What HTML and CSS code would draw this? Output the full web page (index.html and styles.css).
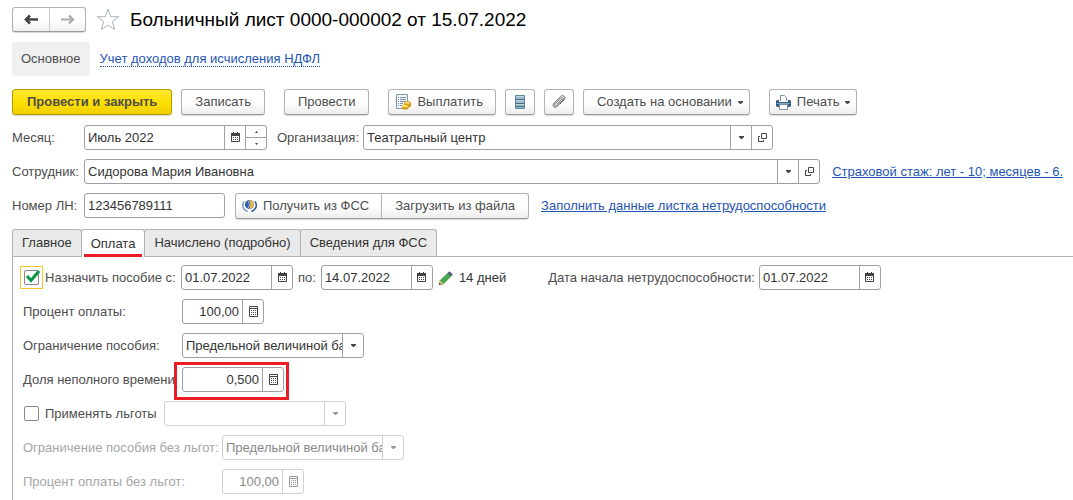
FILE: index.html
```html
<!DOCTYPE html>
<html lang="ru">
<head>
  <meta charset="UTF-8">
  <meta name="viewport" content="width=device-width, initial-scale=1.0">
  <title>Больничный лист 0000-000002 от 15.07.2022</title>
  <link rel="stylesheet" href="styles.css">
</head>
<body>
<!-- Общие иконки полей -->
<svg class="sprite" aria-hidden="true">
  <symbol id="i-calendar" viewBox="0 0 11 11">
    <path d="M1.500 2.500h8v7h-8z" fill="#fff" stroke="#444"/>
    <path d="M1 1h9v3H1z" fill="#444"/>
    <path d="M3.500 0v2M7.500 0v2" stroke="#444"/>
    <path d="M3 5.500h1M5 5.500h1M7 5.500h1M3 7.500h1M5 7.500h1M7 7.500h1" stroke="#444"/>
  </symbol>
  <symbol id="i-calc" viewBox="0 0 11 11">
    <path d="M1.500.5h8v10h-8z" fill="none" stroke="currentColor"/>
    <path d="M2 2.500h7" stroke="currentColor"/>
    <path d="M3 4.500h1M5 4.500h1M7 4.500h1M3 6.500h1M5 6.500h1M7 6.500h1M3 8.500h1M5 8.500h1M7 8.500h1" stroke="currentColor"/>
  </symbol>
  <symbol id="i-open" viewBox="0 0 11 11">
    <path d="M4.500 1.500h5v5h-5z" fill="none" stroke="#444"/>
    <path d="M3 4.500H1.500v5h5V8" fill="none" stroke="#444"/>
  </symbol>
  <symbol id="i-arrow" viewBox="0 0 5 3">
    <path d="M0 0h5v1L3 3H2L0 1z" fill="currentColor"/>
  </symbol>
</svg>

<header class="header">
  <div class="history">
    <button type="button" aria-label="Назад">
      <svg width="15" height="11" viewBox="0 0 15 11"><path d="M2 5.500h12M6 1.500l-4 4 4 4" fill="none" stroke="#444" stroke-width="2.600"/></svg>
    </button>
    <button type="button" aria-label="Вперед">
      <svg width="15" height="11" viewBox="0 0 15 11"><path d="M1 5.500h12M9 1.500l4 4-4 4" fill="none" stroke="#aaa" stroke-width="2.200"/></svg>
    </button>
  </div>
  <button type="button" class="star" aria-label="В избранное">
    <svg width="24" height="23" viewBox="0 0 24 23"><path d="M12 1.200l2.700 7.500h8l-6.400 4.900 2.400 8L12 17l-6.700 4.600 2.400-8-6.400-4.900h8z" fill="#fff" stroke="#a9b3bd"/></svg>
  </button>
  <h1>Больничный лист 0000-000002 от 15.07.2022</h1>
</header>

<nav class="nav">
  <a href="#" class="nav-current">Основное</a>
  <a href="#" class="nav-link">Учет доходов для исчисления НДФЛ</a>
</nav>

<div class="toolbar">
  <button type="button" class="btn primary">Провести и закрыть</button>
  <button type="button" class="btn">Записать</button>
  <button type="button" class="btn spaced">Провести</button>
  <button type="button" class="btn with-icon spaced">
    <svg width="16" height="16" viewBox="0 0 16 16">
      <path d="M1.500.5h11v14h-11z" fill="#f5f8fa" stroke="#8197a8"/>
      <path d="M3 3.500h1M5 3.500h6M3 5.500h1M5 5.500h6M3 7.500h1M5 7.500h6M3 9.500h1M5 9.500h3M3 11.500h1M5 11.500h2" stroke="#7893a8"/>
      <path d="M7 11.500v2.500c0 2.300 6 2.300 6.500 0l2.500-1.500V8.500H9v2z" fill="#e5ac22"/>
      <ellipse cx="12.300" cy="8.700" rx="3.300" ry="1.400" fill="#ffe078" stroke="#c18a12" stroke-width=".6"/>
      <path d="M9 10.500c1 1.500 6 1.500 7 0M7 13.500c1 1.500 5 1.500 6.500 0" fill="none" stroke="#b87e0c" stroke-width=".7"/>
      <ellipse cx="10" cy="12" rx="3" ry="1.200" fill="#ffdc62"/>
    </svg>
    Выплатить
  </button>
  <button type="button" class="btn square" aria-label="Реестр">
    <svg width="10" height="14" viewBox="0 0 10 14">
      <path d="M.5.5h9v13h-9z" fill="#9dbbd0" stroke="#5f8199"/>
      <path d="M1 4.500h8M1 8.500h8M1 11.500h8" stroke="#46677f"/>
      <path d="M1 1.500h8M1 5.500h8M1 9.500h8" stroke="#b9d0df"/>
    </svg>
  </button>
  <button type="button" class="btn square" aria-label="Файлы">
    <svg width="14" height="14" viewBox="0 0 14 14"><path d="M4 9.700l5.300-5.300c.8-.8 1.700.1.900.9L4.800 10.700c-1.500 1.500-3.400-.4-1.900-1.900L8.600 3.100c2-2 4.400.4 2.400 2.400L5.300 11.200C2.600 13.900-.6 10.700 2.100 8L8.500 1.600c2.600-2.600 6 .7 3.400 3.400L8 9" fill="none" stroke="#606060" stroke-width=".9"/></svg>
  </button>
  <button type="button" class="btn">Создать на основании <svg class="caret"><use href="#i-arrow"/></svg></button>
  <button type="button" class="btn with-icon spaced">
    <svg width="15" height="15" viewBox="0 0 15 15">
      <path d="M4.500 6V.500h4l2 2V6" fill="#fff" stroke="#7893a8"/>
      <path d="M1 5h2v2h9V5h2l1 1v5l-1 1H1l-1-1V6z" fill="#315f83"/>
      <path d="M1 8.500h13" stroke="#86a8c1"/>
      <path d="M3.500 9.500h8v5h-8z" fill="#fff" stroke="#7893a8"/>
    </svg>
    Печать <svg class="caret"><use href="#i-arrow"/></svg>
  </button>
</div>

<main class="form">
  <div class="row">
    <label class="head-label" for="month">Месяц:</label>
    <div class="field month">
      <input type="text" id="month" value="Июль 2022">
      <button type="button" aria-label="Выбрать месяц"><svg class="icon"><use href="#i-calendar"/></svg></button>
      <div class="spin">
        <button type="button" aria-label="Больше"><svg width="3" height="2" viewBox="0 0 3 2"><path d="M0 2h3L1.500 0z" fill="#444"/></svg></button>
        <button type="button" aria-label="Меньше"><svg width="3" height="2" viewBox="0 0 3 2"><path d="M0 0h3L1.500 2z" fill="#444"/></svg></button>
      </div>
    </div>
    <label class="org-label" for="org">Организация:</label>
    <div class="field org">
      <select id="org"><option>Театральный центр</option></select>
      <span class="drop"><svg class="caret"><use href="#i-arrow"/></svg></span>
      <button type="button" aria-label="Открыть организацию"><svg class="icon"><use href="#i-open"/></svg></button>
    </div>
  </div>

  <div class="row">
    <label class="head-label" for="employee">Сотрудник:</label>
    <div class="field employee">
      <select id="employee"><option>Сидорова Мария Ивановна</option></select>
      <span class="drop"><svg class="caret"><use href="#i-arrow"/></svg></span>
      <button type="button" aria-label="Открыть сотрудника"><svg class="icon"><use href="#i-open"/></svg></button>
    </div>
    <a href="#" class="link">Страховой стаж: лет - 10; месяцев - 6.</a>
  </div>

  <div class="row">
    <label class="head-label" for="number">Номер ЛН:</label>
    <div class="field number"><input type="text" id="number" value="123456789111"></div>
    <div class="btn-group">
      <button type="button" class="btn with-icon">
        <svg width="15" height="14" viewBox="0 0 15 14">
          <path d="M2 2.500C-.5 6 .5 10.500 5.500 12.500" fill="none" stroke="#7fa6cf" stroke-width="1.600"/>
          <path d="M13 2.500c2.500 3.500 1.500 8-3.500 10" fill="none" stroke="#2e5e9e" stroke-width="1.600"/>
          <circle cx="7.500" cy="5.500" r="4.500" fill="#2f62a5"/>
          <path d="M7 1c6.500 0 6.500 9 0 9 2-3 2-6 0-9z" fill="#f3ba3f"/>
          <path d="M5.500 1.500c2.500 2.500 2.500 6 0 8" fill="none" stroke="#b9d2ea"/>
        </svg>
        Получить из ФСС
      </button>
      <button type="button" class="btn">Загрузить из файла</button>
    </div>
    <a href="#" class="link">Заполнить данные листка нетрудоспособности</a>
  </div>
</main>

<div class="tabs" role="tablist">
  <button type="button" role="tab">Главное</button>
  <button type="button" role="tab" class="active" aria-selected="true">Оплата</button>
  <button type="button" role="tab">Начислено (подробно)</button>
  <button type="button" role="tab">Сведения для ФСС</button>
</div>

<section class="panel" role="tabpanel">
  <div class="row">
    <span class="check focused">
      <input type="checkbox" id="assign" checked>
      <svg width="14" height="13" viewBox="0 0 14 13"><path d="M1 6L5 10.500l8-9.500" fill="none" stroke="#0a9648" stroke-width="3"/></svg>
    </span>
    <label class="assign-label" for="assign">Назначить пособие с:</label>
    <div class="field date">
      <input type="text" aria-label="Дата начала пособия" value="01.07.2022">
      <button type="button" aria-label="Календарь"><svg class="icon"><use href="#i-calendar"/></svg></button>
    </div>
    <label class="to-label" for="date-to">по:</label>
    <div class="field date">
      <input type="text" id="date-to" value="14.07.2022">
      <button type="button" aria-label="Календарь"><svg class="icon"><use href="#i-calendar"/></svg></button>
    </div>
    <svg class="pencil" width="14" height="14" viewBox="0 0 14 14">
      <path d="M0 14l1.200-4.500L8.500 2.200l3.300 3.300L4.500 12.800z" fill="#46ac51" stroke="#317c3b" stroke-width=".6"/>
      <path d="M0 14l1.200-4.500 3.300 3.300z" fill="#e9b266"/>
      <path d="M0 14l.5-2 1.500 1.500z" fill="#333"/>
      <path d="M8.500 2.200L10.500.200l3.300 3.300-2 2z" fill="#4a5872"/>
    </svg>
    <span class="days">14 дней</span>
    <label class="start-label" for="date-start">Дата начала нетрудоспособности:</label>
    <div class="field date-start">
      <input type="text" id="date-start" value="01.07.2022">
      <button type="button" aria-label="Календарь"><svg class="icon"><use href="#i-calendar"/></svg></button>
    </div>
  </div>

  <div class="row">
    <label class="label" for="percent">Процент оплаты:</label>
    <div class="field percent">
      <input type="text" id="percent" value="100,00">
      <button type="button" aria-label="Калькулятор"><svg class="icon"><use href="#i-calc"/></svg></button>
    </div>
  </div>

  <div class="row">
    <label class="label" for="limit">Ограничение пособия:</label>
    <div class="field limit">
      <select id="limit"><option>Предельной величиной базы</option></select>
      <span class="drop"><svg class="caret"><use href="#i-arrow"/></svg></span>
    </div>
  </div>

  <div class="row">
    <label class="label" for="share">Доля неполного времени</label>
    <div class="field share">
      <input type="text" id="share" value="0,500">
      <button type="button" aria-label="Калькулятор"><svg class="icon"><use href="#i-calc"/></svg></button>
    </div>
  </div>

  <div class="row">
    <span class="check"><input type="checkbox" id="benefits"></span>
    <label class="benefits-label" for="benefits">Применять льготы</label>
    <div class="field limit disabled">
      <select aria-label="Льгота" disabled><option></option></select>
      <span class="drop"><svg class="caret"><use href="#i-arrow"/></svg></span>
    </div>
  </div>

  <div class="row disabled">
    <label class="label wide" for="limit-plain">Ограничение пособия без льгот:</label>
    <div class="field limit disabled">
      <select id="limit-plain" disabled><option>Предельной величиной базы</option></select>
      <span class="drop"><svg class="caret"><use href="#i-arrow"/></svg></span>
    </div>
  </div>

  <div class="row disabled">
    <label class="label wide" for="percent-plain">Процент оплаты без льгот:</label>
    <div class="field percent disabled">
      <input type="text" id="percent-plain" value="100,00" disabled>
      <button type="button" aria-label="Калькулятор" disabled><svg class="icon"><use href="#i-calc"/></svg></button>
    </div>
  </div>
</section>
</body>
</html>
```
FILE: styles.css
```css
:root {
  --text: #4d4d4d;
  --input-text: #333333;
  --border: #a0a0a0;
  --line: #b3b3b3;
  --link: #1f55b5;
  --red: #ed1c24;
}

* {
  box-sizing: border-box;
}

body {
  display: flex;
  flex-direction: column;
  min-height: 100vh;
  margin: 0;
  padding: 7px 0 0 12px;
  background-color: #fff;
  color: var(--text);
  font: 13px/16px "Liberation Sans", Arial, sans-serif;
}

button,
input,
select {
  margin: 0;
  font: inherit;
  color: inherit;
}

button {
  padding: 0;
  border: none;
  background: none;
  cursor: pointer;
}

svg {
  display: block;
  flex: none;
}

.sprite {
  position: absolute;
  width: 0;
  height: 0;
}

.icon {
  width: 11px;
  height: 11px;
}

.caret {
  width: 5px;
  height: 3px;
}

/* Заголовок */
.header {
  display: flex;
  align-items: center;
  height: 25px;
}

.history {
  display: flex;
  height: 25px;
  border: 1px solid var(--line);
  border-bottom-color: #999;
  border-radius: 3px;
  background: linear-gradient(#fff 50%, #f0f0f0);
  box-shadow: 0 1px 1px rgba(0, 0, 0, 0.15);
}

.history button {
  display: flex;
  align-items: center;
  justify-content: center;
  width: 36px;
}

.history button + button {
  border-left: 1px solid #ccc;
}

.star {
  margin: 0 10px;
}

h1 {
  margin: 0;
  color: #000;
  font-size: 19px;
  font-weight: normal;
  line-height: 25px;
}

/* Навигация */
.nav {
  display: flex;
  align-items: center;
  gap: 10px;
  margin-top: 10px;
}

.nav-current {
  padding: 9px;
  border-radius: 3px;
  background-color: #f0f0f0;
  color: var(--text);
  text-decoration: none;
}

.nav-link {
  border-bottom: 1px dotted var(--link);
  color: var(--link);
  line-height: 14px;
  text-decoration: none;
}

/* Командная панель */
.toolbar {
  display: flex;
  gap: 9px;
  margin-top: 13px;
}

.btn {
  display: flex;
  align-items: center;
  justify-content: center;
  gap: 6px;
  height: 26px;
  padding: 0 13px;
  border: 1px solid var(--line);
  border-bottom-color: #999;
  border-radius: 3px;
  background: linear-gradient(#fff 50%, #ededed);
  box-shadow: 0 1px 1px rgba(0, 0, 0, 0.15);
  white-space: nowrap;
}

.btn:hover {
  background: #f2f2f2;
}

.btn.primary {
  padding: 0 14px;
  border-color: #b39b00;
  background: linear-gradient(#ffe834, #ffe000 50%, #efcf00);
  font-weight: bold;
}

.btn.spaced {
  margin-left: 10px;
}

.btn.with-icon {
  padding: 0 12px 0 6px;
}

.btn.square {
  width: 30px;
  padding: 0;
}

.btn:has(.caret) {
  padding-right: 6px;
}

/* Поля */
.form {
  display: flex;
  flex-direction: column;
  gap: 9px;
  margin: 10px 10px 0 0;
}

.row {
  display: flex;
  align-items: center;
  height: 25px;
  white-space: nowrap;
}

.row label {
  flex: none;
}

.head-label {
  width: 72px;
}

.field {
  position: relative;
  display: flex;
  flex: none;
  height: 25px;
  border: 1px solid var(--border);
  border-radius: 3px;
  background-color: #fff;
  color: var(--input-text);
}

.field input,
.field select {
  flex: 1;
  min-width: 0;
  padding: 0 3px;
  border: none;
  outline: none;
  background: none;
  appearance: none;
}

.field > button,
.drop,
.spin {
  display: flex;
  flex: none;
  align-items: center;
  justify-content: center;
  width: 21px;
  border-left: 1px solid var(--border);
  color: #444;
}

.spin {
  flex-direction: column;
  align-items: stretch;
}

.spin button {
  display: flex;
  flex: 1;
  align-items: center;
  justify-content: center;
}

.spin button + button {
  border-top: 1px solid var(--border);
}

.month {
  width: 183px;
}

.org-label {
  width: 86px;
  margin-left: 10px;
}

.field.org {
  flex: 0 1 410px;
}

.field.employee {
  flex: 1;
}

.number {
  width: 141px;
}

.link {
  margin-left: 12px;
  color: var(--link);
}

.btn-group {
  display: flex;
  margin-left: 10px;
}

.btn-group .btn:first-child {
  border-radius: 3px 0 0 3px;
}

.btn-group .btn:last-child {
  margin-left: -1px;
  border-radius: 0 3px 3px 0;
}

/* Вкладки */
.tabs {
  display: flex;
  margin-top: 11px;
}

.tabs button {
  height: 27px;
  padding: 0 9px;
  border: 1px solid var(--line);
  border-bottom: none;
  border-radius: 3px 3px 0 0;
  background-color: #eaeaea;
  color: var(--input-text);
  white-space: nowrap;
}

.tabs button + button {
  margin-left: -1px;
}

.tabs button.active {
  position: relative;
  height: 28px;
  margin-bottom: -1px;
  background-color: #fff;
}

.tabs button.active::after {
  content: "";
  position: absolute;
  right: 2px;
  bottom: 0;
  left: 2px;
  height: 3px;
  background-color: var(--red);
}

.panel {
  display: flex;
  flex: 1;
  flex-direction: column;
  gap: 9px;
  padding: 8px 10px 5px;
  border: 1px solid var(--line);
  border-width: 1px 0 0 1px;
}

.label {
  width: 159px;
}

.label.wide {
  width: 199px;
}

.check {
  position: relative;
  flex: none;
  width: 22px;
  padding-left: 1px;
}

.check input {
  display: block;
  width: 15px;
  height: 15px;
  border: 1px solid #888;
  border-radius: 2px;
  appearance: none;
}

/* Жёлтая рамка фокуса */
.check.focused {
  align-self: stretch;
  width: 23px;
  margin: 1px 2px 1px -3px;
  padding: 3px;
  border: 1px solid #f5c625;
}

.check svg {
  position: absolute;
  top: 3px;
  left: 5px;
  pointer-events: none;
}

.assign-label {
  width: 136px;
}

.date {
  width: 112px;
}

.to-label {
  padding: 0 5px;
}

.pencil {
  margin: 0 6px;
}

.days {
  color: var(--input-text);
}

.start-label {
  margin: 0 4px 0 42px;
}

.date-start {
  width: 122px;
}

.percent {
  width: 82px;
}

.percent input,
.share input {
  text-align: right;
}

.limit {
  width: 182px;
}

.limit select {
  padding-right: 0;
}

.share {
  width: 102px;
}

/* Красная рамка вокруг доли времени */
.share::after {
  content: "";
  position: absolute;
  inset: -6px -6px -9px -9px;
  border: 3px solid var(--red);
  pointer-events: none;
}

.benefits-label {
  width: 119px;
}

.row.disabled {
  color: #a6a6a6;
}

.field.disabled {
  border-color: #d0d0d0;
  color: #888;
}

.field.disabled input,
.field.disabled select {
  opacity: 1;
}

.field.disabled > button,
.field.disabled .drop {
  border-color: #d0d0d0;
  color: #999;
}
```
